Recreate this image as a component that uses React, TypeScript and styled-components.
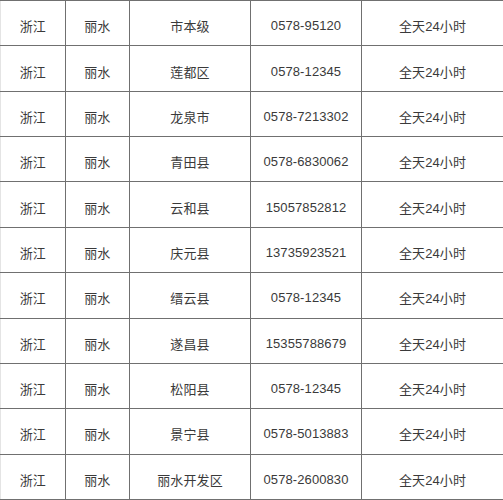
import React from "react";
import styled, { createGlobalStyle } from "styled-components";

const GlobalStyle = createGlobalStyle`
  html, body {
    margin: 0;
    padding: 0;
    background: #ffffff;
  }
`;

const ROWS = [
  { area: "市本级", phone: "0578-95120" },
  { area: "莲都区", phone: "0578-12345" },
  { area: "龙泉市", phone: "0578-7213302" },
  { area: "青田县", phone: "0578-6830062" },
  { area: "云和县", phone: "15057852812" },
  { area: "庆元县", phone: "13735923521" },
  { area: "缙云县", phone: "0578-12345" },
  { area: "遂昌县", phone: "15355788679" },
  { area: "松阳县", phone: "0578-12345" },
  { area: "景宁县", phone: "0578-5013883" },
  { area: "丽水开发区", phone: "0578-2600830" },
];

const COLUMN_WIDTHS = [64.5, 64.5, 121, 111, 142];

export default function App() {
  return (
    <>
      <GlobalStyle />
      <Table>
        <colgroup>
          {COLUMN_WIDTHS.map((w, i) => (
            <col key={i} style={{ width: w }} />
          ))}
        </colgroup>
        <tbody>
          {ROWS.map((row) => (
            <Row key={row.area}>
              <Cell>浙江</Cell>
              <Cell>丽水</Cell>
              <Cell>{row.area}</Cell>
              <Cell>{row.phone}</Cell>
              <Cell>全天24小时</Cell>
            </Row>
          ))}
        </tbody>
      </Table>
    </>
  );
}

const Table = styled.table`
  width: 503px;
  height: 500px;
  table-layout: fixed;
  border-collapse: collapse;
  border-left: 1px solid #e4e4e4;
  border-top: 1px solid #b8b8b8;
`;

const Row = styled.tr`
  height: 45.36px;
`;

const Cell = styled.td`
  padding: 5px 0 0;
  border: 1px solid #707070;
  text-align: center;
  vertical-align: middle;
  color: #3a3a3a;
  font-family: "Liberation Sans", "Noto Sans CJK SC", sans-serif;
  font-size: 13px;
  letter-spacing: 0.1px;

  &:first-child {
    border-left-color: #e4e4e4;
  }
`;
